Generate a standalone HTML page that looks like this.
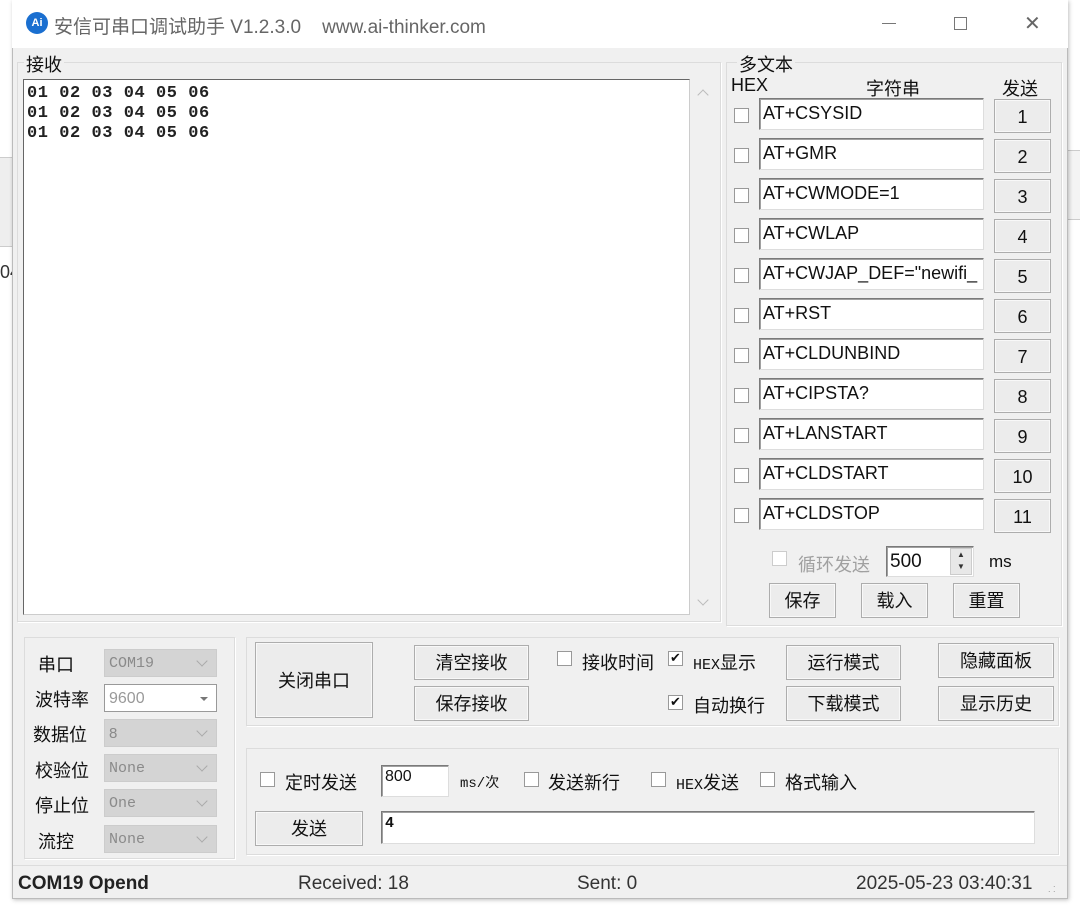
<!DOCTYPE html>
<html><head><meta charset="utf-8"><style>
*{box-sizing:border-box;margin:0;padding:0}
body{width:1080px;height:912px;background:#fff;position:relative;overflow:hidden;font-family:"Liberation Sans","Noto Sans CJK SC",sans-serif;font-size:17px;color:#111}
.a{position:absolute;white-space:nowrap}
.win{position:absolute;left:12px;top:0;width:1056px;height:899px;background:#f0f0f0;border:1px solid #bbb;box-shadow:1px 1px 4px rgba(0,0,0,.25)}
.tb{position:absolute;left:12px;top:0;width:1056px;height:48px;background:#fff}
.btn{position:absolute;background:#ececec;border:1px solid #adadad;box-shadow:inset 0 0 0 1px #f8f8f8;text-align:center;font-size:18px}
.in{position:absolute;background:#fff;border:1px solid #7a7a7a;border-right-color:#ddd;border-bottom-color:#ddd;box-shadow:inset 1px 1px 0 #a0a0a0;font-size:18px;padding-left:3px}
.cb{position:absolute;width:15px;height:15px;background:#fff;border:1px solid #999}
.grp{position:absolute;border:1px solid #dcdcdc;box-shadow:1px 1px 0 #fff}
.cmb{position:absolute;width:113px;height:28px;background:#d4d4d4;border:1px solid #ccc;font-family:"Liberation Mono",monospace;font-size:15px;color:#8a8a8a;padding:5px 4px}
.cmb:after{content:"";position:absolute;right:10px;top:7px;width:7px;height:7px;border-right:1.5px solid #aaa;border-bottom:1.5px solid #aaa;transform:rotate(45deg)}
.cmb.w:after{border:none;transform:none;width:0;height:0;border-left:4px solid transparent;border-right:4px solid transparent;border-top:4px solid #777;top:12px;right:8px}
.lbl{position:absolute;font-size:18px}
.mono{font-family:"Liberation Mono",monospace}
</style></head><body>
<div class="a" style="left:0;top:157px;width:12px;height:90px;background:#eee;border-top:1px solid #ccc;border-bottom:1px solid #ccc"></div>
<div class="a" style="left:0;top:262px;font-size:18px;color:#333">04</div>
<div class="a" style="left:1068px;top:150px;width:12px;height:70px;background:#f4f4f4;border-top:1px solid #ccc;border-bottom:1px solid #ccc"></div>
<div class="win"></div>
<div class="tb"></div>
<div class="a" style="left:26px;top:12px;width:22px;height:22px;border-radius:50%;background:#1a6fd0;color:#fff;font-size:11px;font-weight:bold;text-align:center;line-height:22px">Ai</div>
<div class="a" style="left:54px;top:12px;color:#666;font-size:19px">安信可串口调试助手 V1.2.3.0&nbsp;&nbsp;&nbsp; www.ai-thinker.com</div>
<div class="a" style="left:882px;top:23px;width:14px;height:1px;background:#777"></div>
<div class="a" style="left:954px;top:17px;width:13px;height:13px;border:1px solid #777"></div>
<div class="a" style="left:1024px;top:16px;font-size:20px;color:#666;line-height:16px">✕</div>

<div class="grp" style="left:17px;top:62px;width:704px;height:560px"></div>
<div class="lbl" style="left:24px;top:51px;background:#f0f0f0;padding:0 2px">接收</div>
<div class="a" style="left:23px;top:79px;width:667px;height:536px;background:#fff;border:1px solid #666;border-right-color:#ccc;border-bottom-color:#ccc"></div>
<div class="a mono" style="left:27px;top:84px;font-size:17px;line-height:20px;letter-spacing:0.55px;font-weight:bold;color:#222">01 02 03 04 05 06<br>01 02 03 04 05 06<br>01 02 03 04 05 06</div>
<div class="a" style="left:699px;top:91px;width:8px;height:8px;border-left:1.5px solid #bbb;border-top:1.5px solid #bbb;transform:rotate(45deg)"></div>
<div class="a" style="left:699px;top:596px;width:8px;height:8px;border-right:1.5px solid #bbb;border-bottom:1.5px solid #bbb;transform:rotate(45deg)"></div>

<div class="grp" style="left:726px;top:62px;width:336px;height:564px"></div>
<div class="lbl" style="left:737px;top:51px;background:#f0f0f0;padding:0 2px">多文本</div>
<div class="lbl" style="left:731px;top:75px">HEX</div>
<div class="lbl" style="left:866px;top:75px">字符串</div>
<div class="lbl" style="left:1002px;top:75px">发送</div>

<div class="cb" style="left:734px;top:108px"></div><div class="in" style="left:759px;top:98px;width:225px;height:32px;padding-top:4px">AT+CSYSID</div><div class="btn" style="left:994px;top:99px;width:57px;height:34px;line-height:34px">1</div>
<div class="cb" style="left:734px;top:148px"></div><div class="in" style="left:759px;top:138px;width:225px;height:32px;padding-top:4px">AT+GMR</div><div class="btn" style="left:994px;top:139px;width:57px;height:34px;line-height:34px">2</div>
<div class="cb" style="left:734px;top:188px"></div><div class="in" style="left:759px;top:178px;width:225px;height:32px;padding-top:4px">AT+CWMODE=1</div><div class="btn" style="left:994px;top:179px;width:57px;height:34px;line-height:34px">3</div>
<div class="cb" style="left:734px;top:228px"></div><div class="in" style="left:759px;top:218px;width:225px;height:32px;padding-top:4px">AT+CWLAP</div><div class="btn" style="left:994px;top:219px;width:57px;height:34px;line-height:34px">4</div>
<div class="cb" style="left:734px;top:268px"></div><div class="in" style="left:759px;top:258px;width:225px;height:32px;padding-top:4px;overflow:hidden">AT+CWJAP_DEF="newifi_</div><div class="btn" style="left:994px;top:259px;width:57px;height:34px;line-height:34px">5</div>
<div class="cb" style="left:734px;top:308px"></div><div class="in" style="left:759px;top:298px;width:225px;height:32px;padding-top:4px">AT+RST</div><div class="btn" style="left:994px;top:299px;width:57px;height:34px;line-height:34px">6</div>
<div class="cb" style="left:734px;top:348px"></div><div class="in" style="left:759px;top:338px;width:225px;height:32px;padding-top:4px">AT+CLDUNBIND</div><div class="btn" style="left:994px;top:339px;width:57px;height:34px;line-height:34px">7</div>
<div class="cb" style="left:734px;top:388px"></div><div class="in" style="left:759px;top:378px;width:225px;height:32px;padding-top:4px">AT+CIPSTA?</div><div class="btn" style="left:994px;top:379px;width:57px;height:34px;line-height:34px">8</div>
<div class="cb" style="left:734px;top:428px"></div><div class="in" style="left:759px;top:418px;width:225px;height:32px;padding-top:4px">AT+LANSTART</div><div class="btn" style="left:994px;top:419px;width:57px;height:34px;line-height:34px">9</div>
<div class="cb" style="left:734px;top:468px"></div><div class="in" style="left:759px;top:458px;width:225px;height:32px;padding-top:4px">AT+CLDSTART</div><div class="btn" style="left:994px;top:459px;width:57px;height:34px;line-height:34px">10</div>
<div class="cb" style="left:734px;top:508px"></div><div class="in" style="left:759px;top:498px;width:225px;height:32px;padding-top:4px">AT+CLDSTOP</div><div class="btn" style="left:994px;top:499px;width:57px;height:34px;line-height:34px">11</div>

<div class="cb" style="left:772px;top:551px;border-color:#ccc"></div>
<div class="lbl" style="left:798px;top:551px;color:#a0a0a0">循环发送</div>
<div class="in" style="left:886px;top:546px;width:88px;height:31px;padding-top:4px;font-size:19px">500</div>
<div class="a" style="left:950px;top:548px;width:22px;height:27px;background:#e8e8e8;border:1px solid #ccc;font-size:8px;text-align:center;line-height:12px;color:#333">▲<br>▼</div>
<div class="lbl" style="left:989px;top:552px;font-size:17px">ms</div>
<div class="btn" style="left:769px;top:583px;width:67px;height:35px;line-height:35px">保存</div>
<div class="btn" style="left:861px;top:583px;width:67px;height:35px;line-height:35px">载入</div>
<div class="btn" style="left:953px;top:583px;width:67px;height:35px;line-height:35px">重置</div>

<div class="grp" style="left:24px;top:637px;width:211px;height:222px"></div>
<div class="lbl" style="left:38px;top:651px">串口</div><div class="cmb" style="left:104px;top:649px">COM19</div>
<div class="lbl" style="left:35px;top:686px">波特率</div><div class="cmb w" style="left:104px;top:684px;background:#fff;border-color:#999;font-family:'Liberation Sans',sans-serif;color:#999;font-size:16px">9600</div>
<div class="lbl" style="left:33px;top:721px">数据位</div><div class="cmb" style="left:104px;top:719px;font-family:'Liberation Sans',sans-serif">8</div>
<div class="lbl" style="left:35px;top:757px">校验位</div><div class="cmb" style="left:104px;top:754px">None</div>
<div class="lbl" style="left:35px;top:792px">停止位</div><div class="cmb" style="left:104px;top:789px">One</div>
<div class="lbl" style="left:38px;top:828px">流控</div><div class="cmb" style="left:104px;top:825px">None</div>

<div class="grp" style="left:246px;top:637px;width:813px;height:89px"></div>
<div class="btn" style="left:255px;top:642px;width:118px;height:76px;line-height:76px">关闭串口</div>
<div class="btn" style="left:414px;top:645px;width:115px;height:35px;line-height:35px">清空接收</div>
<div class="btn" style="left:414px;top:686px;width:115px;height:35px;line-height:35px">保存接收</div>
<div class="cb" style="left:557px;top:651px"></div><div class="lbl" style="left:582px;top:649px">接收时间</div>
<div class="cb" style="left:668px;top:651px;font-size:13px;line-height:12px;text-align:center">✔</div><div class="lbl" style="left:693px;top:649px"><span class="mono" style="font-size:15px">HEX</span>显示</div>
<div class="cb" style="left:668px;top:695px;font-size:13px;line-height:12px;text-align:center">✔</div><div class="lbl" style="left:693px;top:692px">自动换行</div>
<div class="btn" style="left:786px;top:645px;width:115px;height:35px;line-height:35px">运行模式</div>
<div class="btn" style="left:786px;top:686px;width:115px;height:35px;line-height:35px">下载模式</div>
<div class="btn" style="left:938px;top:643px;width:116px;height:35px;line-height:35px">隐藏面板</div>
<div class="btn" style="left:938px;top:686px;width:116px;height:35px;line-height:35px">显示历史</div>

<div class="grp" style="left:246px;top:748px;width:813px;height:107px"></div>
<div class="cb" style="left:260px;top:772px"></div><div class="lbl" style="left:285px;top:769px">定时发送</div>
<div class="in" style="left:381px;top:765px;width:68px;height:32px;font-size:16px;padding-top:2px">800</div>
<div class="lbl mono" style="left:460px;top:772px;font-size:14px">ms/次</div>
<div class="cb" style="left:524px;top:772px"></div><div class="lbl" style="left:548px;top:769px">发送新行</div>
<div class="cb" style="left:651px;top:772px"></div><div class="lbl" style="left:676px;top:769px"><span class="mono" style="font-size:15px">HEX</span>发送</div>
<div class="cb" style="left:760px;top:772px"></div><div class="lbl" style="left:785px;top:769px">格式输入</div>
<div class="btn" style="left:255px;top:811px;width:108px;height:35px;line-height:35px">发送</div>
<div class="in" style="left:381px;top:811px;width:654px;height:33px;font-family:'Liberation Mono',monospace;font-size:15px;font-weight:bold;padding-top:3px">4</div>

<div class="a" style="left:13px;top:865px;width:1054px;height:1px;background:#dcdcdc"></div>
<div class="a" style="left:18px;top:873px;font-size:19px;font-weight:bold;color:#222">COM19 Opend</div>
<div class="a" style="left:298px;top:873px;font-size:19px;color:#333">Received: 18</div>
<div class="a" style="left:577px;top:873px;font-size:19px;color:#333">Sent: 0</div>
<div class="a" style="left:856px;top:873px;font-size:19px;color:#333">2025-05-23 03:40:31</div>
<div class="a" style="left:1048px;top:882px;font-size:9px;color:#999;line-height:5px">&nbsp;&nbsp;.<br>.&nbsp;.</div>
</body></html>
